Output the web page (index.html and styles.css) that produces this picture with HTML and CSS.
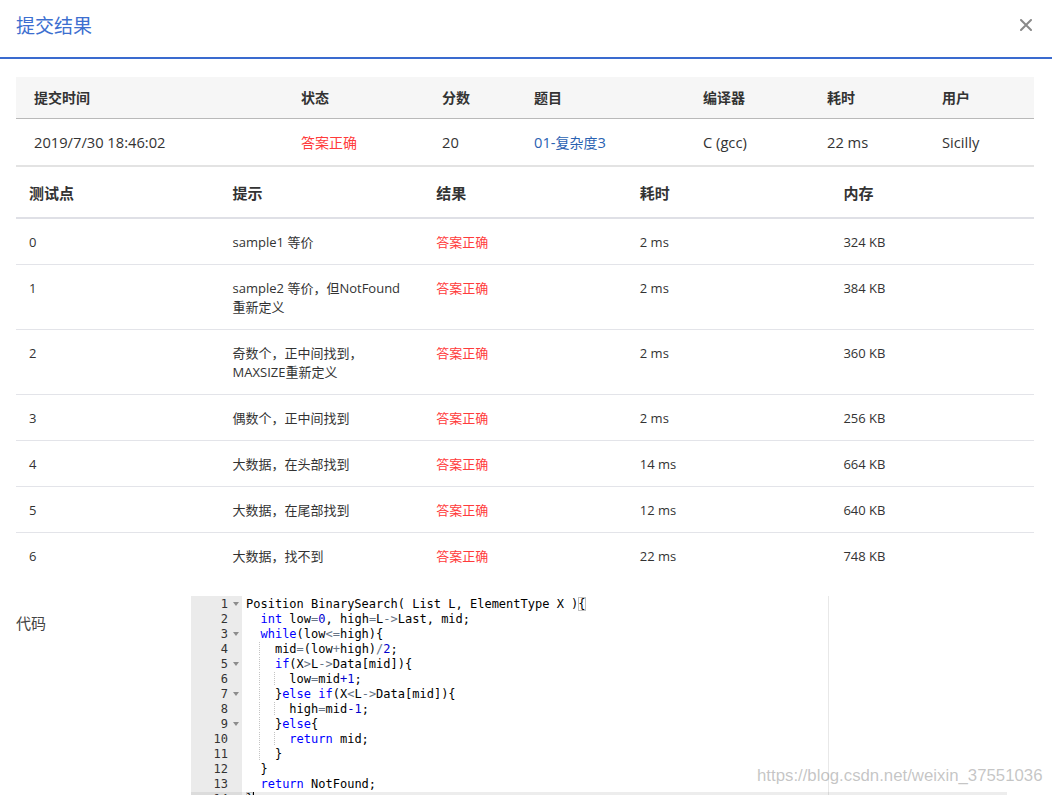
FILE: index.html
```html
<!DOCTYPE html>
<html lang="zh-CN">
<head>
<meta charset="utf-8">
<title>提交结果</title>
<link rel="stylesheet" href="styles.css">
</head>
<body>
<header class="modal-head">
  <h1 class="modal-title">提交结果</h1>
  <button class="close" type="button" aria-label="关闭">
    <svg width="12" height="12" viewBox="0 0 12 12"><path d="M1 1 L11 11 M11 1 L1 11" stroke="#8a8a8a" stroke-width="2" stroke-linecap="round" fill="none"/></svg>
  </button>
</header>

<main class="modal-body">
  <table class="summary">
    <colgroup>
      <col class="c1"><col class="c2"><col class="c3"><col class="c4"><col class="c5"><col class="c6"><col class="c7">
    </colgroup>
    <thead>
      <tr><th>提交时间</th><th>状态</th><th>分数</th><th>题目</th><th>编译器</th><th>耗时</th><th>用户</th></tr>
    </thead>
    <tbody>
      <tr><td class="lat">2019/7/30 18:46:02</td><td class="ok">答案正确</td><td class="lat">20</td><td><a class="link" href="#"><span class="lat">01-</span>复杂度<span class="lat">3</span></a></td><td class="lat">C (gcc)</td><td class="lat">22 ms</td><td class="lat">Sicilly</td></tr>
    </tbody>
  </table>

  <table class="cases">
    <thead>
      <tr><th>测试点</th><th>提示</th><th>结果</th><th>耗时</th><th>内存</th></tr>
    </thead>
    <tbody>
      <tr><td>0</td><td>sample1 等价</td><td class="ok">答案正确</td><td>2 ms</td><td>324 KB</td></tr>
      <tr><td>1</td><td>sample2 等价，但NotFound重新定义</td><td class="ok">答案正确</td><td>2 ms</td><td>384 KB</td></tr>
      <tr><td>2</td><td>奇数个，正中间找到，MAXSIZE重新定义</td><td class="ok">答案正确</td><td>2 ms</td><td>360 KB</td></tr>
      <tr><td>3</td><td>偶数个，正中间找到</td><td class="ok">答案正确</td><td>2 ms</td><td>256 KB</td></tr>
      <tr><td>4</td><td>大数据，在头部找到</td><td class="ok">答案正确</td><td>14 ms</td><td>664 KB</td></tr>
      <tr><td>5</td><td>大数据，在尾部找到</td><td class="ok">答案正确</td><td>12 ms</td><td>640 KB</td></tr>
      <tr><td>6</td><td>大数据，找不到</td><td class="ok">答案正确</td><td>22 ms</td><td>748 KB</td></tr>
    </tbody>
  </table>

  <section class="code-row">
    <div class="code-label">代码</div>
    <div class="editor">
      <div class="gutter">
        <div class="gc"><span class="num">1</span><span class="fold"><i></i></span></div>
        <div class="gc"><span class="num">2</span><span class="fold"></span></div>
        <div class="gc"><span class="num">3</span><span class="fold"><i></i></span></div>
        <div class="gc"><span class="num">4</span><span class="fold"></span></div>
        <div class="gc"><span class="num">5</span><span class="fold"><i></i></span></div>
        <div class="gc"><span class="num">6</span><span class="fold"></span></div>
        <div class="gc"><span class="num">7</span><span class="fold"><i></i></span></div>
        <div class="gc"><span class="num">8</span><span class="fold"></span></div>
        <div class="gc"><span class="num">9</span><span class="fold"><i></i></span></div>
        <div class="gc"><span class="num">10</span><span class="fold"></span></div>
        <div class="gc"><span class="num">11</span><span class="fold"></span></div>
        <div class="gc"><span class="num">12</span><span class="fold"></span></div>
        <div class="gc"><span class="num">13</span><span class="fold"></span></div>
        <div class="gc active"><span class="num">14</span><span class="fold"></span></div>
      </div>
      <div class="code">
<div class="ln">Position BinarySearch( List L, ElementType X )<span class="bm">{</span></div>
<div class="ln">  <span class="k">int</span> low<span class="o">=</span><span class="n">0</span>, high<span class="o">=</span>L<span class="o">-&gt;</span>Last, mid;</div>
<div class="ln">  <span class="k">while</span>(low<span class="o">&lt;=</span>high){</div>
<div class="ln"><span class="ig">  </span>  mid<span class="o">=</span>(low<span class="o">+</span>high)<span class="o">/</span><span class="n">2</span>;</div>
<div class="ln"><span class="ig">  </span>  <span class="k">if</span>(X<span class="o">&gt;</span>L<span class="o">-&gt;</span>Data[mid]){</div>
<div class="ln"><span class="ig">  </span><span class="ig">  </span>  low<span class="o">=</span>mid<span class="n">+1</span>;</div>
<div class="ln"><span class="ig">  </span>  }<span class="k">else</span> <span class="k">if</span>(X<span class="o">&lt;</span>L<span class="o">-&gt;</span>Data[mid]){</div>
<div class="ln"><span class="ig">  </span><span class="ig">  </span>  high<span class="o">=</span>mid<span class="n">-1</span>;</div>
<div class="ln"><span class="ig">  </span>  }<span class="k">else</span>{</div>
<div class="ln"><span class="ig">  </span><span class="ig">  </span>  <span class="k">return</span> mid;</div>
<div class="ln"><span class="ig">  </span>  }</div>
<div class="ln">  }</div>
<div class="ln">  <span class="k">return</span> NotFound;</div>
<div class="ln active"><span class="bm">}</span><span class="cursor"></span></div>
      </div>
    </div>
  </section>
</main>

<div class="watermark">https://blog.csdn.net/weixin_37551036</div>
</body>
</html>
```

FILE: styles.css
```css
html, body {
  margin: 0;
  padding: 0;
  overflow: hidden;
  background: #fff;
}

body {
  font-family: "Open Sans", "Noto Sans CJK SC", sans-serif;
  color: #333;
  width: 1052px;
  height: 795px;
}

.modal-head {
  box-sizing: border-box;
  height: 59px;
  padding: 0 20px 9px 16px;
  border-bottom: 2px solid #3a6bcf;
  display: flex;
  align-items: center;
  justify-content: space-between;
}

.modal-title {
  margin: 0;
  font-family: "Noto Sans CJK SC", sans-serif;
  font-size: 19px;
  font-weight: normal;
  line-height: 27px;
  color: #3d6fd0;
}

.close {
  border: 0;
  background: none;
  padding: 0;
  width: 12px;
  height: 12px;
  display: flex;
  margin-top: 2px;
}

.modal-body {
  padding: 18px 18px 0 16px;
}

table {
  width: 1018px;
  table-layout: fixed;
  border-collapse: separate;
  border-spacing: 0;
}

th {
  text-align: left;
  font-family: "Noto Sans CJK SC", sans-serif;
  font-weight: bold;
  color: #333;
}

/* summary table */
.summary col.c1 { width: 267px; }
.summary col.c2 { width: 141px; }
.summary col.c3 { width: 92px; }
.summary col.c4 { width: 169px; }
.summary col.c5 { width: 124px; }
.summary col.c6 { width: 115px; }
.summary col.c7 { width: 110px; }

.summary th {
  background: #f6f6f6;
  font-size: 14px;
  line-height: 19px;
  padding: 11px 18px 11px;
  border-bottom: 1px solid #b9b9b9;
}

.summary td {
  font-size: 14px;
  line-height: 19px;
  padding: 14px 18px 13px;
  border-bottom: 2px solid #e3e3e3;
}

.summary .lat {
  font-size: 14.7px;
}

.ok { color: #ff3b3b; }

.link {
  color: #2a62b2;
  text-decoration: none;
}

/* test cases table */
.cases th {
  font-size: 15px;
  line-height: 19px;
  padding: 16px 14px 15px 13px;
  border-bottom: 2px solid #dfe0e6;
}

.cases td {
  font-size: 13px;
  line-height: 19px;
  padding: 14px 14px 12px 13px;
  vertical-align: top;
  border-bottom: 1px solid #e3e4e9;
}

.cases tbody tr:last-child td {
  border-bottom: 0;
}

/* code */
.code-row {
  display: flex;
  margin-top: 18px;
}

.code-label {
  width: 175px;
  flex: none;
  padding-top: 17px;
  font-family: "Noto Sans CJK SC", sans-serif;
  font-size: 15px;
  line-height: 20px;
  color: #444;
}

.editor {
  width: 816px;
  height: 200px;
  overflow: hidden;
  display: flex;
  padding-top: 1px;
  font-family: "DejaVu Sans Mono", "Liberation Mono", monospace;
  font-size: 12px;
  line-height: 15px;
}

.gutter {
  width: 51px;
  flex: none;
  background: #ebebeb;
  color: #333;
  margin-top: -1px;
  padding-top: 1px;
}

.gc {
  height: 15px;
  display: flex;
  justify-content: flex-end;
}

.gc.active {
  background: #dcdcdc;
}

.fold {
  width: 14px;
  flex: none;
  display: flex;
  align-items: center;
}

.fold i {
  display: block;
  margin-left: 5px;
  margin-top: -1px;
  width: 0;
  height: 0;
  border-left: 3px solid transparent;
  border-right: 3px solid transparent;
  border-top: 4px solid #8c8c8c;
}

.code {
  flex: 1;
  padding-left: 4px;
  color: #000;
  margin-top: -1px;
  padding-top: 1px;
  background: linear-gradient(#e8e8e8, #e8e8e8) 586px 0 / 1px 100% no-repeat;
}

.ln {
  height: 15px;
  white-space: pre;
  margin-left: -4px;
  padding-left: 4px;
}

.ln.active {
  background: rgba(0, 0, 0, 0.07);
}

.k { color: #0000ff; }
.n { color: #0000cd; }
.o { color: #687687; }

.ig {
  background: repeating-linear-gradient(to bottom, #c4c4c4 0 1px, transparent 1px 2px) right top / 1px 100% no-repeat;
}

.bm {
  outline: 1px solid #c0c0c0;
  outline-offset: -1px;
}

.cursor {
  display: inline-block;
  width: 1px;
  height: 15px;
  background: #000;
  vertical-align: top;
}

.watermark {
  position: absolute;
  left: 757px;
  top: 766px;
  font-family: "Liberation Sans", Arial, sans-serif;
  font-size: 16.8px;
  line-height: 20px;
  color: rgba(140, 140, 140, 0.5);
  white-space: nowrap;
}
```
